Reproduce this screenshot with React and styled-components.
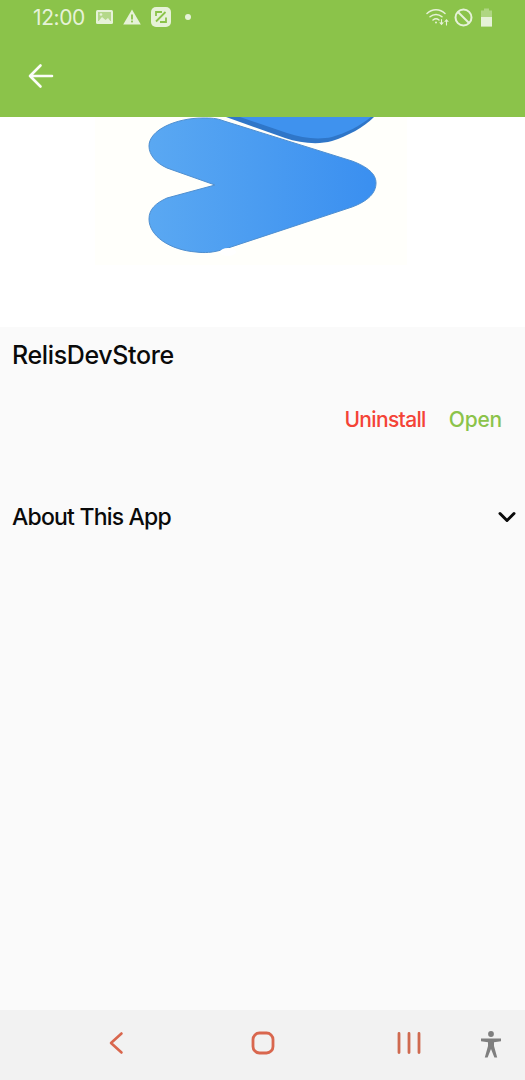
import React from "react";
import styled, { createGlobalStyle } from "styled-components";

const GlobalStyle = createGlobalStyle`
  html, body {
    margin: 0;
    padding: 0;
    background: #fafafa;
  }
`;

const Screen = styled.div`
  width: 525px;
  height: 1080px;
  display: flex;
  flex-direction: column;
  overflow: hidden;
  font-family: Inter, "Liberation Sans", sans-serif;
`;

const Header = styled.header`
  background: #8bc34a;
  height: 117px;
  flex: none;
`;

const StatusBar = styled.div`
  height: 34px;
  display: flex;
  align-items: center;
  padding: 0 32px 0 33px;
  color: #e6f2d8;
`;

const Clock = styled.span`
  font-size: 21px;
  letter-spacing: -0.4px;
  width: 63px;
`;

const StatusGroup = styled.div`
  display: flex;
  align-items: center;
  gap: ${(props) => props.$gap}px;
  margin-left: ${(props) => (props.$end ? "auto" : "0")};
`;

const NoticeDot = styled.span`
  width: 6px;
  height: 6px;
  margin-left: 4px;
  border-radius: 50%;
  background: #e6f2d8;
`;

const Toolbar = styled.div`
  height: 83px;
  display: flex;
  align-items: center;
  padding-left: 28px;
`;

const Hero = styled.div`
  height: 210px;
  flex: none;
  background: #fff;
`;

const HeroArt = styled.svg`
  display: block;
`;

const Main = styled.main`
  flex: 1;
  background: #fafafa;
  display: flex;
  flex-direction: column;
`;

const Title = styled.h1`
  margin: 0;
  padding: 12px 12px 0;
  font-size: 25px;
  line-height: 32px;
  font-weight: 500;
  letter-spacing: -0.37px;
  color: #0a0a0a;
`;

const Actions = styled.div`
  display: flex;
  justify-content: flex-end;
  gap: 23px;
  padding: 33px 23px 0 0;
`;

const Action = styled.span`
  font-size: 21px;
  line-height: 32px;
  font-weight: 500;
  letter-spacing: ${(props) => props.$spacing}px;
  color: ${(props) => props.color};
`;

const AboutRow = styled.div`
  display: flex;
  align-items: center;
  justify-content: space-between;
  padding: 65px 9px 0 12px;
`;

const AboutLabel = styled.span`
  font-size: 23px;
  line-height: 32px;
  font-weight: 500;
  letter-spacing: -0.8px;
  color: #0a0a0a;
`;

const NavBar = styled.nav`
  height: 70px;
  flex: none;
  background: #f2f2f2;
  display: flex;
  align-items: center;
  padding: 0 0 4px 106px;
  box-sizing: border-box;
`;

const NavSlot = styled.div`
  display: flex;
  margin-right: ${(props) => props.$gap}px;
  margin-top: ${(props) => props.$drop || 0}px;
`;

const BackArrow = () => (
  <svg width="26" height="26" viewBox="0 0 26 26" fill="none" stroke="#fbfdf8" strokeWidth="2.6" strokeLinecap="round" strokeLinejoin="round">
    <path d="M2 13H24M12.5 2.5L2 13L12.5 23.5" />
  </svg>
);

const ImageIcon = () => (
  <svg width="17" height="16" viewBox="0 0 17 16">
    <rect x="0" y="1" width="17" height="14" rx="1.5" fill="#e6f2d8" />
    <rect x="2" y="3" width="13" height="9" fill="#8bc34a" opacity="0.55" />
    <path d="M1.5 13.5L6 8L9.5 11L12 9L15.5 13.5Z" fill="#e6f2d8" />
    <circle cx="5" cy="5.5" r="1.3" fill="#e6f2d8" />
  </svg>
);

const WarningIcon = () => (
  <svg width="18" height="16" viewBox="0 0 18 16">
    <path d="M9 0.5L17.8 15.5H0.2Z" fill="#e6f2d8" />
    <rect x="8.1" y="5.5" width="1.8" height="5" fill="#8bc34a" />
    <rect x="8.1" y="11.6" width="1.8" height="1.8" fill="#8bc34a" />
  </svg>
);

const ShareIcon = () => (
  <svg width="20" height="20" viewBox="0 0 20 20">
    <rect width="20" height="20" rx="5" fill="#e6f2d8" />
    <path d="M5 14.5L14.5 5" stroke="#8bc34a" strokeWidth="1.8" />
    <path d="M5 9V5H11M15 10.5V15H9" fill="none" stroke="#8bc34a" strokeWidth="1.8" />
  </svg>
);

const WifiIcon = () => (
  <svg width="24" height="18" viewBox="0 0 24 18" fill="none" stroke="#e6f2d8" strokeWidth="1.5" strokeLinecap="round">
    <path d="M1 5.5C6 0.5 14 0.5 19 5.5" />
    <path d="M4 8.8C7.5 5.6 12.5 5.6 16 8.8" />
    <path d="M7 12C8.8 10.6 11.2 10.6 13 12" />
    <circle cx="10" cy="14.6" r="1" fill="#e6f2d8" stroke="none" />
    <path d="M15.5 11.5V16M14 14.6L15.5 16.3L17 14.6" strokeWidth="1.1" />
    <path d="M20.5 17V12M19 13.5L20.5 11.8L22 13.5" strokeWidth="1.1" />
  </svg>
);

const BlockedIcon = () => (
  <svg width="19" height="19" viewBox="0 0 19 19" fill="none" stroke="#e6f2d8" strokeWidth="2">
    <circle cx="9.5" cy="9.5" r="8" />
    <path d="M4 4L15 15" />
  </svg>
);

const BatteryIcon = () => (
  <svg width="16" height="19" viewBox="-3 0 16 19">
    <path d="M4 0.5H9V2.5H12V18.5H1V2.5H4Z" fill="#e6f2d8" opacity="0.4" />
    <rect x="1" y="9" width="11" height="9.5" fill="#e6f2d8" />
  </svg>
);

// logo cropped by the top of the hero, coordinates are the hero's own
const LogoArt = () => (
  <HeroArt width="525" height="210" viewBox="0 0 525 210">
    <defs>
      <linearGradient id="logoFill" x1="0" y1="0" x2="1" y2="0">
        <stop offset="0" stopColor="#5aa8f2" />
        <stop offset="1" stopColor="#3a8ff0" />
      </linearGradient>
    </defs>
    <rect x="95" y="0" width="312" height="148" fill="#fffffb" />
    <path d="M226 0L285 21C300 26 318 28 332 24C348 19 364 10 374 0Z" fill="#2f76c8" />
    <path d="M240 0L287 16C302 21 318 23 332 20C346 16 360 9 371 0Z" fill="#3f92ee" />
    <path
      d="M203 1C211 1 216 1 224 4L352 44C368 50 376 57 376 66C376 76 368 84 352 90L225 132C212 136 204 136 196 135C170 133 149 119 149 102C149 92 156 86 167 81L215 68L167 51C156 46 149 38 149 29C149 13 176 1 203 1Z"
      fill="url(#logoFill)"
      stroke="#4f8fd0"
      strokeWidth="1"
    />
    <ellipse cx="228" cy="135" rx="8" ry="4" fill="#fff" />
  </HeroArt>
);

const ChevronDown = () => (
  <svg width="18" height="12" viewBox="0 0 18 12" fill="none" stroke="#0a0a0a" strokeWidth="3" strokeLinecap="round" strokeLinejoin="round">
    <path d="M2 2.5L9 9.5L16 2.5" />
  </svg>
);

const NavBack = () => (
  <svg width="18" height="26" viewBox="0 0 18 26" fill="none" stroke="#d9674e" strokeWidth="2.6" strokeLinecap="round" strokeLinejoin="round">
    <path d="M15.5 3.5L5 13L15.5 22.5" />
  </svg>
);

const NavHome = () => (
  <svg width="24" height="24" viewBox="0 0 24 24" fill="none" stroke="#d9674e" strokeWidth="2.8">
    <rect x="2" y="2" width="20" height="20" rx="6.5" />
  </svg>
);

const NavRecents = () => (
  <svg width="24" height="24" viewBox="0 0 24 24" fill="none" stroke="#cf6a50" strokeWidth="2.8" strokeLinecap="round">
    <path d="M2 2.5V21.5M12 2.5V21.5M22 2.5V21.5" />
  </svg>
);

const NavAccessibility = () => (
  <svg width="22" height="27" viewBox="0 0 22 27" fill="#7f7f7f">
    <circle cx="11" cy="3" r="2.9" />
    <path d="M1 7.5H21V10.2L14 11.2V15L17.2 26.5H14.4L11 18L7.6 26.5H4.8L8 15V11.2L1 10.2Z" />
  </svg>
);

const App = () => (
  <Screen>
    <GlobalStyle />
    <Header>
      <StatusBar>
        <Clock>12:00</Clock>
        <StatusGroup $gap={10}>
          <ImageIcon />
          <WarningIcon />
          <ShareIcon />
          <NoticeDot />
        </StatusGroup>
        <StatusGroup $end $gap={4}>
          <WifiIcon />
          <BlockedIcon />
          <BatteryIcon />
        </StatusGroup>
      </StatusBar>
      <Toolbar>
        <BackArrow />
      </Toolbar>
    </Header>
    <Hero>
      <LogoArt />
    </Hero>
    <Main>
      <Title>RelisDevStore</Title>
      <Actions>
        <Action color="#f44336" $spacing={-0.65}>Uninstall</Action>
        <Action color="#8bc34a" $spacing={-0.2}>Open</Action>
      </Actions>
      <AboutRow>
        <AboutLabel>About This App</AboutLabel>
        <ChevronDown />
      </AboutRow>
    </Main>
    <NavBar>
      <NavSlot $gap={127}>
        <NavBack />
      </NavSlot>
      <NavSlot $gap={122}>
        <NavHome />
      </NavSlot>
      <NavSlot $gap={59}>
        <NavRecents />
      </NavSlot>
      <NavSlot $gap={0} $drop={3}>
        <NavAccessibility />
      </NavSlot>
    </NavBar>
  </Screen>
);

export default App;
